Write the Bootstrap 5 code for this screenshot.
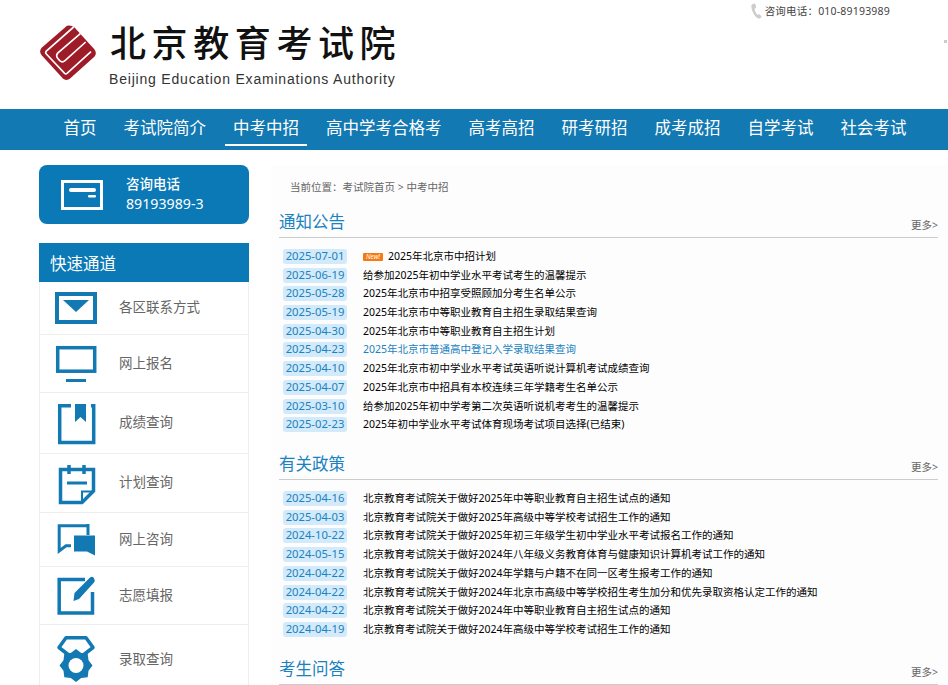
<!DOCTYPE html>
<html lang="zh-CN">
<head>
<meta charset="utf-8">
<title>中考中招</title>
<link href="https://cdn.jsdelivr.net/npm/bootstrap@5.3.0/dist/css/bootstrap.min.css" rel="stylesheet">
<style>
html,body{height:685px;overflow:hidden;background:#fff}
body{font-family:"Noto Sans","Noto Sans CJK SC",sans-serif;font-size:10.5px;color:#000;line-height:1.5}
a{color:inherit;text-decoration:none}
.brand-zone{height:109px;padding-left:39px}
.logo-mark{width:58px;height:56px;margin-top:25px;flex:none}
.logo-words{margin-left:12px;padding-top:14px}
.logo-cn{font-family:"Noto Sans CJK SC",serif;font-size:36px;font-weight:500;letter-spacing:5.6px;line-height:54px;color:#111;margin-left:1px;white-space:nowrap}
.logo-en{font-family:"Liberation Sans",sans-serif;font-size:14px;line-height:16px;letter-spacing:.8px;color:#333;margin-top:3px;white-space:nowrap}
.tel-zone{margin-left:auto;padding-right:58px;padding-top:3px;color:#444;font-size:10.5px;line-height:16px;letter-spacing:.2px;position:relative}
.tel-zone svg{margin-right:3px;vertical-align:top}
.speck{position:absolute;right:1px;top:40px;width:3px;height:3px;background:#ccc}
.main-nav{height:41px;background:#1279b3;padding:0 0 0 55.5px;gap:11px}
.main-nav a{color:#fff;font-size:16.5px;line-height:37px;height:37px;padding:0 8px;white-space:nowrap;font-family:"Noto Sans CJK SC",sans-serif}
.main-nav a.on{border-bottom:2px solid #fff}
.page-body{padding:15px 0 0 39px}
.side-col{width:210px;flex:none}
.call-box{height:59px;background:#0b79b6;border-radius:8px;color:#fff;padding-left:22px}
.call-box svg{flex:none}
.call-text{margin-left:23px;font-size:13px;line-height:19.5px;font-family:"Noto Sans CJK SC",sans-serif}
.call-text b{font-weight:500;display:block;font-size:13.5px;margin-top:-2px}
.call-text span{font-family:"Noto Sans",sans-serif;font-size:14.2px;display:block}
.quick-head{margin-top:19px;height:39px;background:#0b79b6;color:#fff;font-size:16.5px;line-height:40px;padding-left:11px;font-family:"Noto Sans CJK SC",sans-serif}
.quick-list{border-left:1px solid #eee;border-right:1px solid #eee}
.quick-item{border-bottom:1px solid #eee;color:#666;font-size:13.5px;font-family:"Noto Sans CJK SC",sans-serif}
.quick-item .ico{width:79px;flex:none;display:block}
.quick-item .lbl{padding-bottom:3px}
.h1r{height:53px}.h2r{height:58px}.h3r{height:61px}.h4r{height:59px}.h5r{height:54px}.h6r{height:58px}.h7r{height:70px}
.content-col{margin-left:22px;flex:1;background:#fdfdfd;padding:0 10px 0 8px;height:520px}
.crumb{color:#666;padding:14px 0 0 11px;line-height:16px;height:45px}
.sec-head{border-bottom:1px solid #ccc;height:28px;padding-left:0}
.sec-head h2{font-size:16.5px;font-weight:400;color:#1a82c0;margin:0;line-height:23px;font-family:"Noto Sans CJK SC",sans-serif}
.sec-head a{color:#666;font-size:10.5px;line-height:14px;margin-top:8px}
.news{list-style:none;margin:0;padding:9px 0 0 4px}
.news li{height:18.72px;display:flex;align-items:center;line-height:15px;white-space:nowrap}
.stamp{width:64px;height:15px;flex:none;background:#d2eafa;color:#1a82c0;font-size:11.25px;line-height:14px;border-radius:3px;text-align:center;margin-right:16px}
.news li.hot a{color:#1a82c0}
.new-tag{display:inline-block;width:20px;height:8px;background:#f77a10;color:#fff;font-size:6.5px;line-height:8px;text-align:center;border-radius:1px;margin-right:5px;vertical-align:1px}
.sec-gap{margin-top:18px}
.sec-gap2{margin-top:18px}
</style>
</head>
<body>
<header class="brand-zone d-flex">
  <svg class="logo-mark" viewBox="57 44 172 168" aria-hidden="true">
    <path d="M140 46q12-3 22 5l60 66q9 12 0 22l-72 65q-12 10-23 0L64 135q-9-12 0-23z" fill="#9e1b28"/>
    <path d="M160 50 78 122q-4 5 0 9l55 58q3 3 7 0l72-65" fill="none" stroke="#fff" stroke-width="5"/>
    <path d="M180 70 112 128q-6 8 0 16l6 7q8 7 16 0l62-56" fill="none" stroke="#fff" stroke-width="5"/>
  </svg>
  <div class="logo-words">
    <div class="logo-cn">北京教育考试院</div>
    <div class="logo-en">Beijing Education Examinations Authority</div>
  </div>
  <div class="tel-zone">
    <svg width="11" height="16" viewBox="0 0 11 16" aria-hidden="true"><path d="M1 1.500 3.400.6q.6-.2.9.4l.8 3q.1.6-.4.9L3.500 6q.3 3 3 6l1.400-.8q.5-.2 1 .2l1.500 2q.3.6-.2 1l-1.800 1Q6 15.600 3 11.500.2 7 .3 3q0-1 .7-1.500z" fill="#ccc"/></svg>咨询电话&#xFF1A;010-89193989
    <i class="speck"></i>
  </div>
</header>
<nav class="main-nav d-flex">
  <a href="#">首页</a><a href="#">考试院简介</a><a href="#" class="on">中考中招</a><a href="#">高中学考合格考</a><a href="#">高考高招</a><a href="#">研考研招</a><a href="#">成考成招</a><a href="#">自学考试</a><a href="#">社会考试</a>
</nav>
<div class="page-body d-flex">
  <aside class="side-col">
    <div class="call-box d-flex align-items-center">
      <svg width="42" height="30" viewBox="0 0 42 30" aria-hidden="true"><rect x="1.500" y="1.500" width="39" height="27" fill="none" stroke="#fff" stroke-width="3"/><rect x="8" y="8" width="27" height="4" rx="2" fill="#fff"/><rect x="27" y="15" width="8" height="2.500" rx="1" fill="#fff"/></svg>
      <div class="call-text"><b>咨询电话</b><span>89193989-3</span></div>
    </div>
    <div class="quick-head">快速通道</div>
    <div class="quick-list">
      <a href="#" class="quick-item h1r d-flex align-items-center"><span class="ico"><svg class="d-block" width="79" height="52" viewBox="0 0 79 52" aria-hidden="true"><rect x="17" y="12" width="38" height="28" fill="none" stroke="#1279b3" stroke-width="4"/><path d="M23 18H49L36 30z" fill="#1279b3"/></svg></span><span class="lbl">各区联系方式</span></a>
      <a href="#" class="quick-item h2r d-flex align-items-center"><span class="ico"><svg class="d-block" width="79" height="57" viewBox="0 0 79 57" aria-hidden="true"><rect x="17.700" y="12.700" width="37" height="23.500" fill="none" stroke="#1279b3" stroke-width="3.500"/><rect x="26" y="44" width="20" height="3" fill="#1279b3"/></svg></span><span class="lbl">网上报名</span></a>
      <a href="#" class="quick-item h3r d-flex align-items-center"><span class="ico"><svg class="d-block" width="79" height="60" viewBox="0 0 79 60" aria-hidden="true"><path d="M31 12.700H19.700V49.500H53.700V12.700H51" fill="none" stroke="#1279b3" stroke-width="3.500"/><path d="M35 11H46V29L40.500 24 35 29z" fill="#1279b3"/></svg></span><span class="lbl">成绩查询</span></a>
      <a href="#" class="quick-item h4r d-flex align-items-center"><span class="ico"><svg class="d-block" width="79" height="58" viewBox="0 0 79 58" aria-hidden="true"><path d="M20.500 15.500V48.500H42L53.500 37V15.500z" fill="none" stroke="#1279b3" stroke-width="3.500"/><path d="M42 48V37.500H53" fill="none" stroke="#1279b3" stroke-width="2"/><path d="M29 11V20M44 11V20" stroke="#1279b3" stroke-width="3.500"/><rect x="27" y="27.500" width="20" height="3" fill="#1279b3"/></svg></span><span class="lbl">计划查询</span></a>
      <a href="#" class="quick-item h5r d-flex align-items-center"><span class="ico"><svg class="d-block" width="79" height="53" viewBox="0 0 79 53" aria-hidden="true"><path d="M48 12.700H19.200V38L26 32.800H31" fill="none" stroke="#1279b3" stroke-width="3"/><path d="M48 11V22" stroke="#1279b3" stroke-width="3"/><path d="M34 22.500H55V42.500L47 38.500H34z" fill="#1279b3"/></svg></span><span class="lbl">网上咨询</span></a>
      <a href="#" class="quick-item h6r d-flex align-items-center"><span class="ico"><svg class="d-block" width="79" height="57" viewBox="0 0 79 57" aria-hidden="true"><path d="M45 12.500H19.200V46H52.500V25" fill="none" stroke="#1279b3" stroke-width="3.500" /><path d="M33.500 34 34.500 26 50 10.500q2-1.500 3.500 0l1 2q.8 1.500-.5 3L39 32z" fill="#1279b3"/></svg></span><span class="lbl">志愿填报</span></a>
      <a href="#" class="quick-item h7r d-flex align-items-center"><span class="ico"><svg class="d-block" width="79" height="69" viewBox="0 0 79 69" aria-hidden="true"><path d="M30 31 19 22.500 26 12.700H46L53 22.500 42 31" fill="none" stroke="#1279b3" stroke-width="3.500" stroke-linejoin="round"/><path d="M36 24l5.200 4 6.500.8.800 6.500 4 5.200-4 5.200-.8 6.500-6.500.8-5.200 4-5.200-4-6.500-.8-.8-6.500-4-5.200 4-5.200.8-6.500 6.500-.8z" fill="#1279b3"/><circle cx="36" cy="40.500" r="7.500" fill="#fff"/></svg></span><span class="lbl">录取查询</span></a>
    </div>
  </aside>
  <main class="content-col">
    <div class="crumb">当前位置&#xFF1A;考试院首页 &gt; 中考中招</div>
    <div class="sec-head d-flex justify-content-between"><h2>通知公告</h2><a href="#">更多&gt;</a></div>
    <ul class="news">
      <li><span class="stamp">2025-07-01</span><a href="#"><i class="new-tag">New!</i>2025年北京市中招计划</a></li>
      <li><span class="stamp">2025-06-19</span><a href="#">给参加2025年初中学业水平考试考生的温馨提示</a></li>
      <li><span class="stamp">2025-05-28</span><a href="#">2025年北京市中招享受照顾加分考生名单公示</a></li>
      <li><span class="stamp">2025-05-19</span><a href="#">2025年北京市中等职业教育自主招生录取结果查询</a></li>
      <li><span class="stamp">2025-04-30</span><a href="#">2025年北京市中等职业教育自主招生计划</a></li>
      <li class="hot"><span class="stamp">2025-04-23</span><a href="#">2025年北京市普通高中登记入学录取结果查询</a></li>
      <li><span class="stamp">2025-04-10</span><a href="#">2025年北京市初中学业水平考试英语听说计算机考试成绩查询</a></li>
      <li><span class="stamp">2025-04-07</span><a href="#">2025年北京市中招具有本校连续三年学籍考生名单公示</a></li>
      <li><span class="stamp">2025-03-10</span><a href="#">给参加2025年初中学考第二次英语听说机考考生的温馨提示</a></li>
      <li><span class="stamp">2025-02-23</span><a href="#">2025年初中学业水平考试体育现场考试项目选择(已结束)</a></li>
    </ul>
    <div class="sec-head sec-gap d-flex justify-content-between"><h2>有关政策</h2><a href="#">更多&gt;</a></div>
    <ul class="news">
      <li><span class="stamp">2025-04-16</span><a href="#">北京教育考试院关于做好2025年中等职业教育自主招生试点的通知</a></li>
      <li><span class="stamp">2025-04-03</span><a href="#">北京教育考试院关于做好2025年高级中等学校考试招生工作的通知</a></li>
      <li><span class="stamp">2024-10-22</span><a href="#">北京教育考试院关于做好2025年初三年级学生初中学业水平考试报名工作的通知</a></li>
      <li><span class="stamp">2024-05-15</span><a href="#">北京教育考试院关于做好2024年八年级义务教育体育与健康知识计算机考试工作的通知</a></li>
      <li><span class="stamp">2024-04-22</span><a href="#">北京教育考试院关于做好2024年学籍与户籍不在同一区考生报考工作的通知</a></li>
      <li><span class="stamp">2024-04-22</span><a href="#">北京教育考试院关于做好2024年北京市高级中等学校招生考生加分和优先录取资格认定工作的通知</a></li>
      <li><span class="stamp">2024-04-22</span><a href="#">北京教育考试院关于做好2024年中等职业教育自主招生试点的通知</a></li>
      <li><span class="stamp">2024-04-19</span><a href="#">北京教育考试院关于做好2024年高级中等学校考试招生工作的通知</a></li>
    </ul>
    <div class="sec-head sec-gap2 d-flex justify-content-between"><h2>考生问答</h2><a href="#">更多&gt;</a></div>
  </main>
</div>
<script src="https://cdn.jsdelivr.net/npm/bootstrap@5.3.0/dist/js/bootstrap.bundle.min.js"></script>
</body>
</html>
